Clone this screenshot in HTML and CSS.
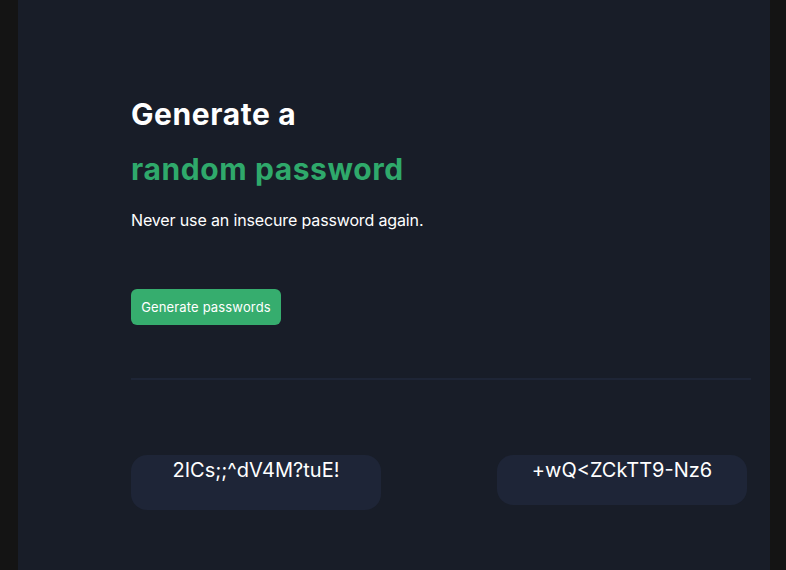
FILE: index.html
```html
<!DOCTYPE html>
<html lang="en">
<head>
<meta charset="utf-8">
<title>Password Generator</title>
<link rel="stylesheet" href="styles.css">
</head>
<body>
<main class="container">
  <section class="hero">
    <h1 class="title">Generate a<br><span class="accent">random password</span></h1>
    <p class="subtitle">Never use an insecure password again.</p>
    <button class="btn">Generate passwords</button>
  </section>
  <hr class="divider">
  <section class="results">
    <div class="pw pw-tall">2ICs;;^dV4M?tuE!</div>
    <div class="pw">+wQ&lt;ZCkTT9-Nz6</div>
  </section>
</main>
</body>
</html>
```

FILE: styles.css
```css
* { box-sizing: border-box; }
html, body { margin: 0; padding: 0; height: 100%; }
body {
  background: #141414;
  font-family: Inter, "Liberation Sans", sans-serif;
  color: #ffffff;
  padding: 0 16px 0 18px;
}
.container {
  background: #181d28;
  min-height: 100%;
  padding: 0 19px 0 113px;
  overflow: hidden;
}
.hero { padding-top: 87px; }
.title {
  margin: 0;
  font-size: 30px;
  font-weight: 700;
  line-height: 55px;
  letter-spacing: 0.6px;
}
.accent { color: #2fa96b; }
.subtitle {
  margin: 11px 0 0;
  font-size: 16px;
  line-height: 24px;
  letter-spacing: -0.14px;
}
.btn {
  margin-top: 57px;
  width: 150px;
  height: 36px;
  border: none;
  border-radius: 6px;
  background: #36ad6e;
  color: #fff;
  font-family: Inter, "Liberation Sans", sans-serif;
  font-size: 13px;
  letter-spacing: 0.15px;
  padding: 0;
}
.divider {
  margin: 53px 0 0;
  border: none;
  height: 2px;
  background: #1e2536;
}
.results {
  display: flex;
  gap: 116px;
  margin-top: 75px;
  align-items: flex-start;
}
.pw {
  width: 250px;
  height: 50px;
  background: #1e2537;
  border-radius: 16px;
  text-align: center;
  font-size: 20px;
  line-height: 28px;
  padding-top: 1px;
}
.pw-tall { height: 55px; }
```
